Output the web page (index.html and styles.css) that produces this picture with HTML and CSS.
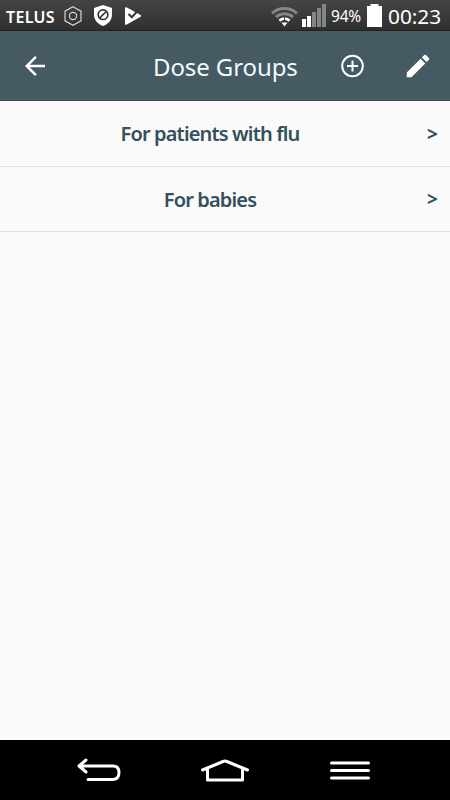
FILE: index.html
```html
<!DOCTYPE html>
<html lang="en">
  <head>
    <meta charset="UTF-8" />
    <meta name="viewport" content="width=device-width, initial-scale=1.0" />
    <title>Dose Groups</title>
    <link rel="stylesheet" href="styles.css">
  </head>
  <body>
    <div class="status-bar">
      <span class="carrier">TELUS</span>
      <svg class="hexagon" width="18" height="20" viewBox="0 0 18 20" fill="none" stroke="#d5d5d5" stroke-width="1.2">
        <path d="M9 .8 17 5.2v9.6L9 19.2 1 14.8V5.2z" />
        <circle cx="9" cy="10" r="3.6" />
      </svg>
      <svg class="shield" width="18" height="21" viewBox="0 0 18 21">
        <path d="M9 0 18 3v7c0 5-4 9-9 11-5-2-9-6-9-11V3z" fill="#fff" />
        <circle cx="9" cy="9.7" r="4.8" fill="none" stroke="#333" stroke-width="1.7" />
        <path d="m5.8 12.9 6.4-6.4" stroke="#333" stroke-width="1.7" />
      </svg>
      <svg class="play" width="18" height="18" viewBox="0 0 18 18">
        <path d="M1 1.2C1 .3 1.7 0 2.4.3l14.2 7.6c.8.5.8 1.4 0 1.9L2.4 17.7c-.8.4-1.4 0-1.4-.8z" fill="#fff" />
        <path d="m4.5 7 3.3 3.3 7.4-8" fill="none" stroke="#393939" stroke-width="2" />
      </svg>
      <svg class="wifi" width="27" height="21" viewBox="0 0 27 21" fill="none" stroke-width="3">
        <path d="M1 7.5a18 18 0 0 1 25 0M5 11.2a12.5 12.5 0 0 1 17 0" stroke="#858585" />
        <path d="M8.4 14.7a7.4 7.4 0 0 1 10.2 0" stroke="#fff" stroke-width="2.8" stroke-dasharray="5 1" />
        <path d="M10.4 16.4h6.2L13.5 20.5z" fill="#fff" />
      </svg>
      <svg class="signal" width="24" height="23" viewBox="0 0 24 23">
        <path d="M0 15h4v8H0zM5 12h4v11H5z" fill="#fff" />
        <path d="M10 8h4v15h-4zM15 4h4v19h-4zM20 0h4v23h-4z" fill="#858585" />
      </svg>
      <span class="percent">94%</span>
      <svg class="battery" width="15" height="23" viewBox="0 0 15 23">
        <path d="M3.5 0h8v2H15v21H0V2h3.5z" fill="#fff" />
      </svg>
      <span class="clock">00:23</span>
    </div>

    <header class="toolbar">
      <svg class="back" width="30" height="30" viewBox="0 0 24 24" fill="#fff">
        <path d="M20 11H7.83l5.59-5.59L12 4l-8 8 8 8 1.41-1.41L7.83 13H20z" />
      </svg>
      <h1 class="title">Dose Groups</h1>
      <svg class="add" width="24" height="24" viewBox="0 0 24 24" fill="none" stroke="#fff" stroke-width="2">
        <circle cx="11.5" cy="12" r="10.3" />
        <path d="M11.5 6.5v11M6 12h11" />
      </svg>
      <svg class="edit" width="30" height="30" viewBox="0 0 24 24" fill="#fff">
        <path d="M3 17.25V21h3.75L17.81 9.94l-3.75-3.75zM20.71 7.04a1 1 0 0 0 0-1.41l-2.34-2.34a1 1 0 0 0-1.41 0l-1.83 1.83 3.75 3.75z" />
      </svg>
    </header>

    <main class="groups">
      <div class="group">
        <span class="name">For patients with flu</span>
        <span class="chevron">&gt;</span>
      </div>
      <div class="group">
        <span class="name">For babies</span>
        <span class="chevron">&gt;</span>
      </div>
    </main>

    <nav class="nav-bar">
      <svg width="44" height="24" viewBox="0 0 44 24">
        <path d="M9 2 2 8l7 6M3 8h33q6 0 6 6.5T36 21.5H11" />
      </svg>
      <svg width="50" height="24" viewBox="0 0 50 24">
        <path d="M2.5 12 23 3.5q2-.8 4 0L47.5 12M7.500 11v11h35V11" />
      </svg>
      <svg width="42" height="24" viewBox="0 0 42 24">
        <path d="M2.500 5h37M2.500 12.500h37M2.500 20h37" />
      </svg>
    </nav>
  </body>
</html>
```
FILE: styles.css
```css
* {
  padding: 0;
  margin: 0;
  box-sizing: border-box;
  font-family: "Noto Sans", "Open Sans", sans-serif;
}

body {
  display: flex;
  flex-direction: column;
  height: 100vh;
  overflow: hidden;
  background-color: #fafafa;
}

svg {
  display: block;
  flex-shrink: 0;
}

/* system status bar */
.status-bar {
  display: flex;
  align-items: center;
  height: 31px;
  padding-left: 6px;
  background: linear-gradient(#454545, #303030 29px, #1c1f20);
  color: white;
  white-space: nowrap;
}

.carrier {
  width: 58px;
  padding-top: 2px;
  font-size: 16px;
  font-weight: 600;
  letter-spacing: 0.3px;
}

.shield {
  margin-left: 12px;
}

.play {
  margin-left: 12px;
}

.wifi {
  margin: 2px 4px 0 129px;
}

.signal {
  margin-right: 5px;
}

.percent {
  width: 36px;
  font-size: 15.5px;
  letter-spacing: -0.2px;
}

.battery {
  margin-right: 6px;
}

.clock {
  font-size: 20.8px;
}

/* app header */
.toolbar {
  display: flex;
  align-items: center;
  height: 70px;
  padding-left: 20px;
  background-color: #455a62;
  border-bottom: 1px solid #394e56;
}

.title {
  width: 188px;
  margin-left: 103px;
  padding-top: 2px;
  color: #f4f9fa;
  font-size: 24px;
  font-weight: 400;
  letter-spacing: -0.1px;
  white-space: nowrap;
}

.edit {
  margin-left: 38px;
}

/* list of groups */
.groups {
  flex: 1;
}

.group {
  display: flex;
  align-items: center;
  height: 65px;
  padding: 0 11px 0 7px;
  border-bottom: 1px solid #e1e1e1;
  color: #34505a;
  font-size: 20px;
  font-weight: 600;
}

.group:first-child {
  height: 66px;
}

.name {
  flex: 1;
  padding-right: 14px;
  text-align: center;
  letter-spacing: -0.85px;
}

.chevron {
  width: 12px;
  font-size: 19px;
  font-weight: 700;
}

/* system navigation buttons */
.nav-bar {
  display: flex;
  align-items: center;
  gap: 79px;
  height: 60px;
  padding-left: 77px;
  background-color: black;
}

.nav-bar svg {
  fill: none;
  stroke: white;
  stroke-width: 3;
  stroke-linecap: round;
  stroke-linejoin: round;
}
```
